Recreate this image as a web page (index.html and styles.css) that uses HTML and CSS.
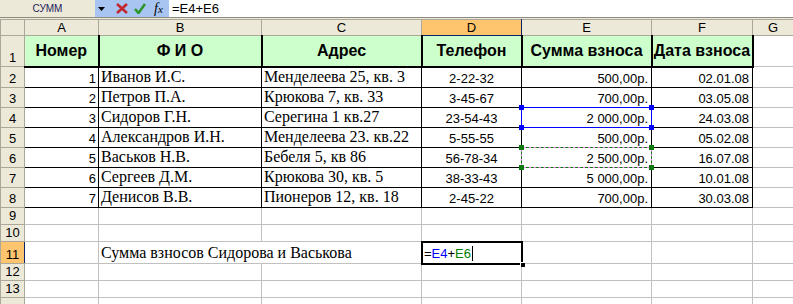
FILE: index.html
```html
<!DOCTYPE html>
<html lang="ru">
<head>
  <meta charset="UTF-8">
  <title>Взносы</title>
  <link rel="stylesheet" href="styles.css">
</head>
<body>
  <div class="formula-bar">
    <div class="name-box">СУММ</div>
    <div class="tools">
      <svg class="drop" width="7" height="4" viewBox="0 0 7 4"><polygon points="0,0 7,0 3.5,4" fill="#000"/></svg>
      <svg class="cancel" width="12" height="11" viewBox="0 0 12 11"><path d="M1 1 L11 10 M11 1 L1 10" stroke="#c1272d" stroke-width="2.6" fill="none"/></svg>
      <svg class="enter" width="12" height="11" viewBox="0 0 12 11"><path d="M1 6 L4.5 10 L11 1" stroke="#2c962c" stroke-width="2.6" fill="none"/></svg>
      <span class="fx">f<span>x</span></span>
    </div>
    <div class="formula">=E4+E6</div>
  </div>
  <div class="gap"></div>

  <table class="sheet">
    <colgroup>
      <col style="width:24px"><col style="width:74px"><col style="width:163px"><col style="width:160px">
      <col style="width:100px"><col style="width:130px"><col style="width:101px"><col style="width:41px">
    </colgroup>
    <tr class="cols">
      <th class="corner"></th><th>A</th><th>B</th><th>C</th><th class="sel-col">D</th><th>E</th><th>F</th><th>G</th>
    </tr>
    <tr class="r-head">
      <th class="rh">1</th>
      <td class="hd">Номер</td><td class="hd">Ф И О</td><td class="hd">Адрес</td>
      <td class="hd">Телефон</td><td class="hd">Сумма взноса</td><td class="hd">Дата взноса</td><td></td>
    </tr>
    <tr class="r20">
      <th class="rh">2</th>
      <td class="t num">1</td><td class="t tm">Иванов И.С.</td><td class="t tm">Менделеева 25, кв. 3</td>
      <td class="t mid">2-22-32</td><td class="t right">500,00р.</td><td class="t right last">02.01.08</td><td></td>
    </tr>
    <tr class="r20">
      <th class="rh">3</th>
      <td class="t num">2</td><td class="t tm">Петров П.А.</td><td class="t tm">Крюкова 7, кв. 33</td>
      <td class="t mid">3-45-67</td><td class="t right">700,00р.</td><td class="t right last">03.05.08</td><td></td>
    </tr>
    <tr class="r20">
      <th class="rh">4</th>
      <td class="t num">3</td><td class="t tm">Сидоров Г.Н.</td><td class="t tm">Серегина 1 кв.27</td>
      <td class="t mid">23-54-43</td>
      <td class="t right ref">2 000,00р.
        <span class="ref-blue"><i class="h tl"></i><i class="h tr"></i><i class="h bl"></i><i class="h br"></i></span>
      </td>
      <td class="t right last">24.03.08</td><td></td>
    </tr>
    <tr class="r20">
      <th class="rh">5</th>
      <td class="t num">4</td><td class="t tm">Александров И.Н.</td><td class="t tm">Менделеева 23. кв.22</td>
      <td class="t mid">5-55-55</td><td class="t right">500,00р.</td><td class="t right last">05.02.08</td><td></td>
    </tr>
    <tr class="r20">
      <th class="rh">6</th>
      <td class="t num">5</td><td class="t tm">Васьков Н.В.</td><td class="t tm">Бебеля 5, кв 86</td>
      <td class="t mid">56-78-34</td>
      <td class="t right ref">2 500,00р.
        <span class="ref-green"></span><span class="ref-dash"><i class="h tl"></i><i class="h tr"></i><i class="h bl"></i><i class="h br"></i></span>
      </td>
      <td class="t right last">16.07.08</td><td></td>
    </tr>
    <tr class="r20">
      <th class="rh">7</th>
      <td class="t num">6</td><td class="t tm">Сергеев Д.М.</td><td class="t tm">Крюкова 30, кв. 5</td>
      <td class="t mid">38-33-43</td><td class="t right">5 000,00р.</td><td class="t right last">10.01.08</td><td></td>
    </tr>
    <tr class="r20">
      <th class="rh">8</th>
      <td class="t num">7</td><td class="t tm">Денисов В.В.</td><td class="t tm">Пионеров 12, кв. 18</td>
      <td class="t mid">2-45-22</td><td class="t right">700,00р.</td><td class="t right last">30.03.08</td><td></td>
    </tr>
    <tr class="r17">
      <th class="rh">9</th><td></td><td></td><td></td><td></td><td></td><td></td><td></td>
    </tr>
    <tr class="r17">
      <th class="rh">10</th><td></td><td></td><td></td><td></td><td></td><td></td><td></td>
    </tr>
    <tr class="r22">
      <th class="rh sel-row">11</th><td></td>
      <td class="tm spill">Сумма взносов Сидорова и Васькова</td><td></td>
      <td class="active">=<span class="blue">E4</span>+<span class="green">E6</span><span class="caret"></span>
        <span class="active-box"><i class="fill"></i></span>
      </td>
      <td></td><td></td><td></td>
    </tr>
    <tr class="r16">
      <th class="rh">12</th><td></td><td></td><td></td><td></td><td></td><td></td><td></td>
    </tr>
    <tr class="r17">
      <th class="rh">13</th><td></td><td></td><td></td><td></td><td></td><td></td><td></td>
    </tr>
    <tr class="r20">
      <th class="rh">14</th><td></td><td></td><td></td><td></td><td></td><td></td><td></td>
    </tr>
  </table>
</body>
</html>
```

FILE: styles.css
```css
* { box-sizing: border-box; }
html, body { margin: 0; padding: 0; }
body { width: 793px; height: 304px; overflow: hidden; background: #fff; font-family: "Liberation Sans", Arial, sans-serif; color: #000; }

/* formula bar */
.formula-bar { display: flex; height: 18px; border-bottom: 1px solid #8e8b80; background: #fff; }
.name-box { width: 95px; background: #ece9d8; color: #1c1c5c; font-size: 10px; line-height: 17px; text-align: center; }
.tools { width: 74px; background: #a8c5f2; display: flex; align-items: center; position: relative; }
.tools .drop { margin-left: 3px; margin-top: 1px; }
.tools .cancel { margin-left: 11px; }
.tools .enter { margin-left: 6px; }
.tools .fx { margin-left: 8px; font-family: "Liberation Serif", serif; font-style: italic; font-size: 14px; line-height: 14px; }
.tools .fx span { font-size: 11px; }
.formula { padding-left: 3px; font-size: 13px; line-height: 17px; }
.gap { height: 1px; background: #ece9d8; }

/* sheet */
.sheet { border-collapse: collapse; table-layout: fixed; width: 793px; }
.sheet td, .sheet th { padding: 0 2px; border: 1px solid #c0c0c0; font-size: 13px; line-height: 15px; white-space: nowrap; overflow: hidden; vertical-align: bottom; }
.sheet th { background: #ece9d8; border-color: #aca899; font-weight: normal; text-align: center; }
.cols { height: 16px; }
.cols th { vertical-align: middle; }
.sheet th.rh { padding-bottom: 1px; }
.sheet th.sel-col { background: #ffc46e; border-bottom-color: #0a246a; border-right-color: #0a246a; }
.sheet th.sel-row { background: #ffc46e; border-right-color: #0a246a; }

.r-head { height: 31px; }
.r20 { height: 20px; }
.r22 { height: 22px; }
.r17 { height: 17px; }
.r16 { height: 16px; }

.sheet td.hd { background: #ccffcc; border: 2px solid #000; border-top: 1px solid #000; font-weight: bold; font-size: 16px; line-height: 18px; text-align: center; vertical-align: middle; padding: 0; }
.sheet td.hd:first-of-type { border-left: 1px solid #aca899; }

.sheet td.t { border: 1px solid #000; padding-bottom: 1px; }
.sheet td.t.num { border-left-color: #aca899; text-align: right; padding-right: 2px; }
.sheet td.tm { font-family: "Liberation Serif", "Times New Roman", serif; font-size: 16px; line-height: 18px; padding-bottom: 1px; }
.sheet td.mid { text-align: center; }
.sheet td.right { text-align: right; padding-right: 3px; }

.sheet td.spill { overflow: visible; border-right-style: hidden; padding-left: 2px; }

/* reference highlights */
.sheet td.ref { position: relative; overflow: visible; }
.ref-blue, .ref-green, .ref-dash { position: absolute; left: -1px; top: -1px; right: -1px; bottom: -1px; z-index: 2; }
.ref-blue { border: 1px solid #0000ff; }
.ref-green { border: 1px solid #ff80ff; }
.ref-dash { border: 1px dashed #0d7a0d; }
.h { position: absolute; width: 5px; height: 5px; background: #0000ff; }
.ref-dash .h { background: #0d7a0d; }
.h.tl { left: -3px; top: -3px; }
.h.tr { right: -3px; top: -3px; }
.h.bl { left: -3px; bottom: -3px; }
.h.br { right: -3px; bottom: -3px; }

/* active cell */
.sheet td.active { position: relative; overflow: visible; padding-left: 2px; padding-bottom: 2px; }
.active-box { position: absolute; left: -1px; top: -1px; right: -2px; bottom: -2px; border: 2px solid #000; z-index: 2; }
.active-box .fill { position: absolute; right: -4px; bottom: -4px; width: 5px; height: 5px; background: #000; border: 1px solid #fff; border-right: 0; border-bottom: 0; }
.blue { color: #0000ff; }
.green { color: #008000; }
.caret { display: inline-block; width: 1px; height: 15px; background: #000; vertical-align: bottom; margin-left: 1px; }
```
